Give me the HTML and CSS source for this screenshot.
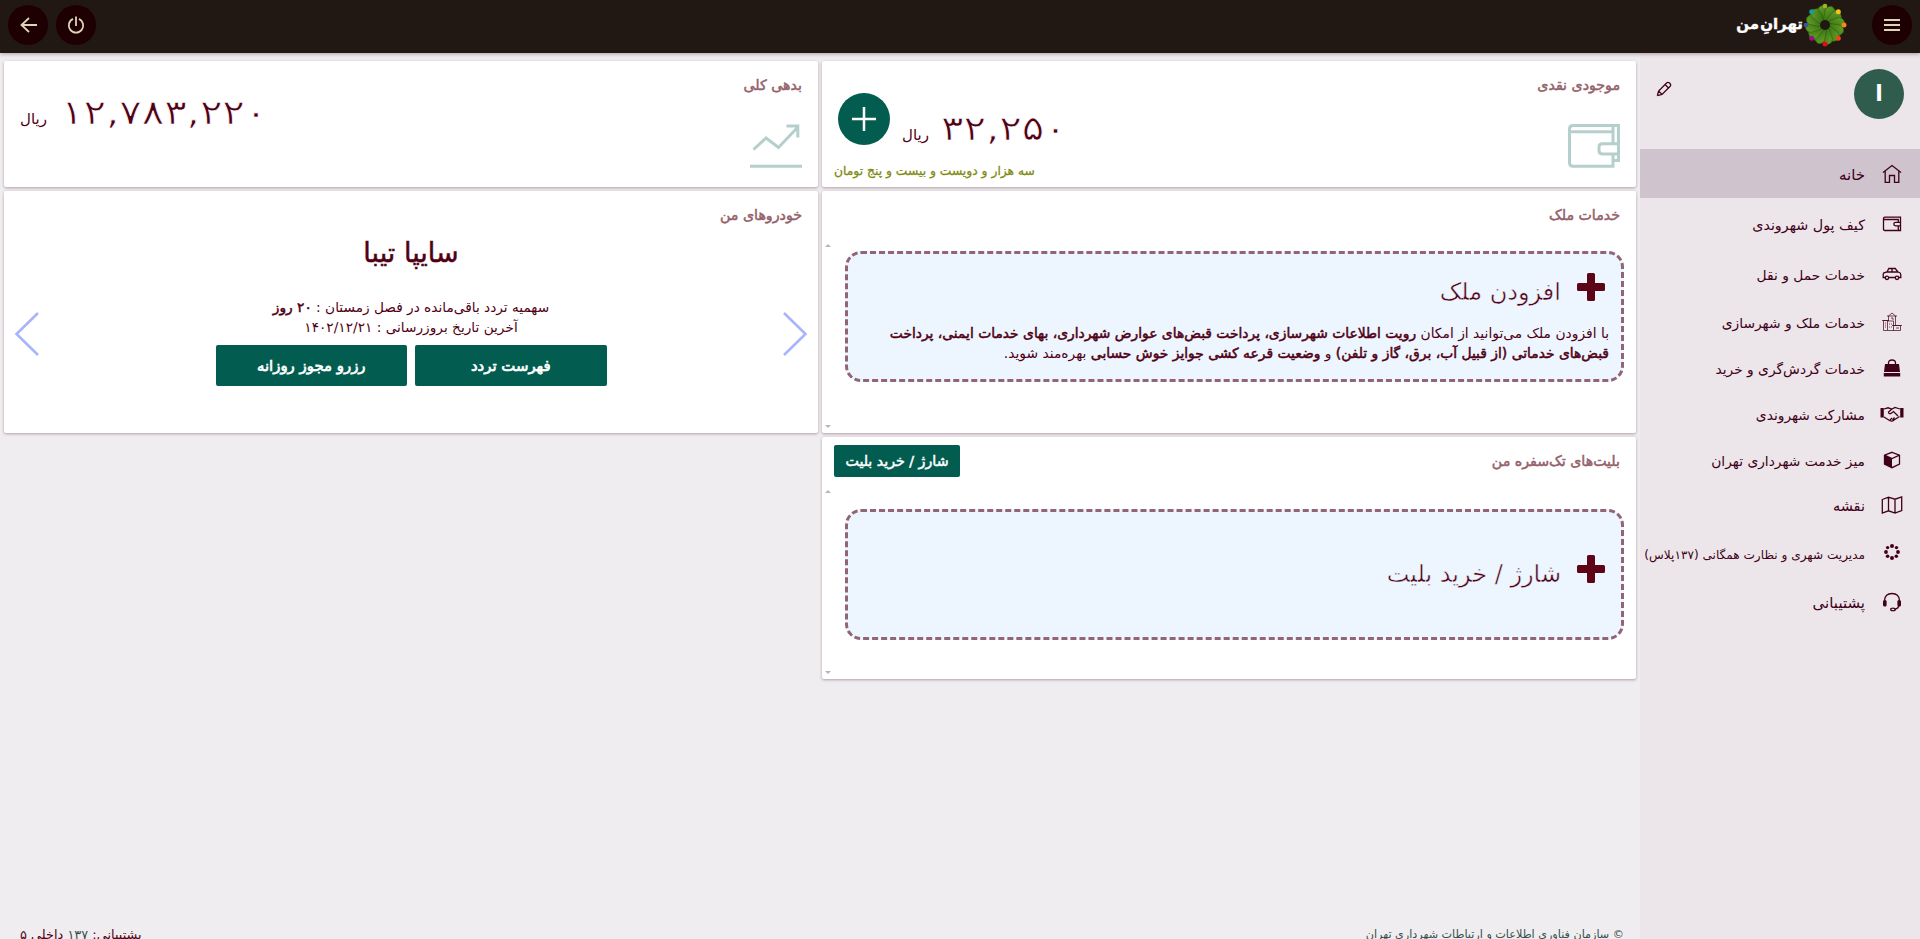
FILE: index.html
```html
<!DOCTYPE html>
<html lang="fa" dir="rtl">

<head>
  <meta charset="UTF-8">
  <meta name="viewport" content="width=device-width, initial-scale=1.0">
  <title>تهران من</title>
  <link rel="stylesheet" href="styles.css">
</head>

<body>
  <header class="topbar">
    <button class="round">
      <svg width="16" height="12" viewBox="0 0 16 12"><path d="M0 1h16M0 6h16M0 11h16" /></svg>
    </button>
    <div class="logo">
      <svg width="44" height="44" viewBox="-22 -22 44 44">
        <defs>
          <linearGradient id="leaf" x1="0" y1="0" x2="1" y2="1">
            <stop offset="0" stop-color="#6ba32c" />
            <stop offset="1" stop-color="#2f6d0c" />
          </linearGradient>
          <path id="petal" d="M-4 -4L-7.5 -14Q-7 -18.5 -3 -19.5L2 -18Q4 -10 1 -4Z" fill="url(#leaf)" stroke="#28570e" stroke-width=".5" />
        </defs>
        <use href="#petal" />
        <use href="#petal" transform="rotate(30)" />
        <use href="#petal" transform="rotate(60)" />
        <use href="#petal" transform="rotate(90)" />
        <use href="#petal" transform="rotate(120)" />
        <use href="#petal" transform="rotate(150)" />
        <use href="#petal" transform="rotate(180)" />
        <use href="#petal" transform="rotate(210)" />
        <use href="#petal" transform="rotate(240)" />
        <use href="#petal" transform="rotate(270)" />
        <use href="#petal" transform="rotate(300)" />
        <use href="#petal" transform="rotate(330)" />
        <circle r="5" fill="#211713" />
        <circle cx="0" cy="-19" r="2.3" fill="#a4b51c" />
        <circle cx="13.3" cy="-13.3" r="2.5" fill="#f3c318" />
        <circle cx="19" cy="0" r="2.5" fill="#f28a1c" />
        <circle cx="13.3" cy="13.3" r="2.5" fill="#ee4419" />
        <circle cx="0" cy="19" r="2.5" fill="#e30d18" />
        <circle cx="-13.3" cy="13.3" r="2.5" fill="#96127f" />
        <circle cx="-19" cy="0" r="2.3" fill="#3457a8" />
        <circle cx="-13.3" cy="-13.3" r="2.5" fill="#1a9a9d" />
      </svg>
      <span>تهرانِ من</span>
    </div>
    <button class="round power">
      <svg width="18" height="18" viewBox="0 0 18 18"><path d="M6 2.9A7.2 7.2 0 1 0 12 2.9M9 0.5V10" /></svg>
    </button>
    <button class="round">
      <svg width="17" height="16" viewBox="0 0 17 16"><path d="M17 8H1.5M9 1L1.5 8L9 15" /></svg>
    </button>
  </header>

  <div class="page">
    <aside class="sidebar">
      <div class="profile">
        <div class="avatar">ا</div>
        <svg class="pencil" width="16" height="16" viewBox="0 0 16 16"><path d="M1.3 14.7L2.6 10L10.8 1.8Q12 .8 13.2 1.8L14.2 2.8Q15.2 4 14.2 5.2L6 13.4L1.3 14.7M9 3.5L12.5 7M2.6 10L6 13.4" /></svg>
      </div>
      <nav class="menu">
        <a class="active home">
          <svg width="20" height="20" viewBox="0 0 20 20"><path d="M1 8.5L10 1.5L19 8.5M3.2 7V18.3H7.5V11.5H12.5V18.3H16.8V7" /></svg>
          <span>خانه</span>
        </a>
        <a class="wallet">
          <svg width="20" height="18" viewBox="0 0 20 18"><path d="M2.2 2.2H18.5V15.5H2.8Q1.5 15.5 1.5 14V3.5Q1.5 2.2 3 2.2M2 4.5H16.3V7.5M18.5 7.3H13.5Q11.8 7.3 11.8 9Q11.8 10.8 13.5 10.8H18.5M16.3 11V15" /></svg>
          <span>کیف پول شهروندی</span>
        </a>
        <a class="car">
          <svg width="20" height="14" viewBox="0 0 20 14"><path d="M3.2 10.5H1.2V7.2Q1.2 5.8 3 5.5L5 5L6.8 1.5H13.2L16 5L17.4 5.5Q18.8 6 18.8 8V10.5H16.8M6.8 10.5H13.2M5 5H16M10 1.5V5" /><circle cx="5" cy="10.8" r="1.7" /><circle cx="15" cy="10.8" r="1.7" /></svg>
          <span>خدمات حمل و نقل</span>
        </a>
        <a class="city">
          <svg width="20" height="20" viewBox="0 0 20 20"><path d="M1.5 18.5V8.5H5.5V18.5H1.5M5.5 18.5H18.5V13.5H11.5M5.5 9H11.5V18.5M6.5 9V4L10 1L13.5 4V13M5 4H15M0 8.5H7M9 6H11V8M3 11h1M3 13h1M3 15h1M7 12h1M9 12h1M7 15h1M9 15h1M14 16h3M10 13.5h10" /></svg>
          <span>خدمات ملک و شهرسازی</span>
        </a>
        <a class="bag">
          <svg width="20" height="20" viewBox="0 0 20 20"><path class="fill" d="M3 6H17L18 14H2ZM1.8 15H18.2V18.5H1.8Z" /><path class="handle" d="M6.5 9V5Q6.5 2 10 2Q13.5 2 13.5 5V9" /></svg>
          <span>خدمات گردش‌گری و خرید</span>
        </a>
        <a class="hands">
          <svg width="24" height="18" viewBox="0 0 24 18"><path d="M4 4L8 2.8L12 4L15 2.5L20 4M4 12L9.5 15.5Q12 17 14 15L19.5 11.5M12 4L8.5 7Q8.5 9.2 11 8.5L13.5 6.5L18 11M10 15L12 13M12.5 15L14.5 12.5" /><path class="fill" d="M0.5 3H3.8V12.5H0.5ZM20.2 3H23.5V12.5H20.2Z" /></svg>
          <span>مشارکت شهروندی</span>
        </a>
        <a class="cube">
          <svg width="18" height="18" viewBox="0 0 18 18"><path d="M9 1.3L16.5 4.2V13L9 16.7L1.5 13V4.2ZM1.5 4.2L9 7.5L16.5 4.2" /><path class="fill" d="M1.5 4.2L9 7.5V16.7L1.5 13Z" /></svg>
          <span>میز خدمت شهرداری تهران</span>
        </a>
        <a class="map">
          <svg width="22" height="18" viewBox="0 0 22 18"><path d="M1.3 3.5L7.5 1.2L14 3.2L20.7 1V14.5L14 17L7.5 14.8L1.3 17ZM7.5 1.2V14.8M14 3.2V17" /></svg>
          <span>نقشه</span>
        </a>
        <a class="plus137">
          <svg width="16" height="16" viewBox="0 0 16 16"><circle class="fill" cx="8" cy="2" r="2" /><circle class="fill" cx="12.5" cy="3.6" r="1.7" /><circle class="fill" cx="14" cy="8" r="1.9" /><circle class="fill" cx="12.3" cy="12.3" r="1.8" /><circle class="fill" cx="8" cy="14" r="2" /><circle class="fill" cx="3.6" cy="12.3" r="1.8" /><circle class="fill" cx="2" cy="8" r="1.9" /><circle class="fill" cx="3.6" cy="3.6" r="1.7" /></svg>
          <span>مدیریت شهری و نظارت همگانی (۱۳۷پلاس)</span>
        </a>
        <a class="support">
          <svg width="20" height="20" viewBox="0 0 20 20"><path d="M2.5 8.5Q3 1.5 10 1.5Q17 1.5 17.5 8.5M17.3 13Q16 17 12.5 17.3" /><rect class="fill" x="1" y="8" width="3.6" height="6.5" rx="1.5" /><rect class="fill" x="15.4" y="8" width="3.6" height="6.5" rx="1.5" /><ellipse cx="11" cy="17.4" rx="2.3" ry="1.3" /></svg>
          <span>پشتیبانی</span>
        </a>
      </nav>
    </aside>

    <main class="content">
      <div class="cards">
        <section class="card cash">
          <div class="info">
            <h2>موجودی نقدی</h2>
            <svg class="pale" width="52" height="44" viewBox="0 0 52 44"><path d="M45 6.5V1.5H5Q1.5 1.5 1.5 5V38.5Q1.5 42.3 5 42.3H45V31M1.5 7.8H45V19.5M45 1.5H50.5V36.5H46M50.5 19.8H34.5Q31 19.8 31 23V26.5Q31 30 34.5 30H50.5" /></svg>
          </div>
          <div class="sum">
            <div class="money">
              <span class="num">۳۲,۲۵۰</span>
              <span class="rial">ریال</span>
              <button class="add"><svg width="24" height="24" viewBox="0 0 24 24"><path d="M12 0V24M0 12H24" /></svg></button>
            </div>
            <p class="words">سه هزار و دویست و بیست و پنج تومان</p>
          </div>
        </section>

        <section class="card debt">
          <div class="info">
            <h2>بدهی کلی</h2>
            <svg class="pale" width="52" height="44" viewBox="0 0 52 44"><path d="M3.5 25.5L16 14L28.5 23.5L47 4M36.5 2H47.8V13.5M0 42.2H52" /></svg>
          </div>
          <div class="money">
            <span class="num">۱۲,۷۸۳,۲۲۰</span>
            <span class="rial">ریال</span>
          </div>
        </section>

        <section class="card estate">
          <div class="head">
            <h2>خدمات ملک</h2>
          </div>
          <div class="scroll">
            <div class="dashed">
              <div class="big">
                <svg width="28" height="28" viewBox="0 0 28 28"><path d="M11.5 0H16.5Q18 0 18 1.5V10H26.5Q28 10 28 11.5V16.5Q28 18 26.5 18H18V26.5Q18 28 16.5 28H11.5Q10 28 10 26.5V18H1.5Q0 18 0 16.5V11.5Q0 10 1.5 10H10V1.5Q10 0 11.5 0Z" /></svg>
                <span>افزودن ملک</span>
              </div>
              <p>با افزودن ملک می‌توانید از امکان <b>رویت اطلاعات شهرسازی، پرداخت قبض‌های عوارض شهرداری، بهای خدمات ایمنی، پرداخت</b></p>
              <p><b>قبض‌های خدماتی (از قبیل آب، برق، گاز و تلفن)</b> و <b>وضعیت قرعه کشی جوایز خوش حسابی</b> بهره‌مند شوید.</p>
            </div>
          </div>
        </section>

        <section class="card cars">
          <h2>خودروهای من</h2>
          <div class="slider">
            <svg class="arrow" width="26" height="44" viewBox="0 0 26 44"><path d="M2 1L23.5 22L2 43" /></svg>
            <div class="slide">
              <h3>سایپا تیبا</h3>
              <p>سهمیه تردد باقی‌مانده در فصل زمستان : <b>۲۰ روز</b></p>
              <p>آخرین تاریخ بروزرسانی : ۱۴۰۲/۱۲/۲۱</p>
              <div class="actions">
                <button>فهرست تردد</button>
                <button>رزرو مجوز روزانه</button>
              </div>
            </div>
            <svg class="arrow" width="26" height="44" viewBox="0 0 26 44"><path d="M24 1L2.5 22L24 43" /></svg>
          </div>
        </section>

        <section class="card ticket">
          <div class="head">
            <h2>بلیت‌های تک‌سفره من</h2>
            <button class="charge">شارژ / خرید بلیت</button>
          </div>
          <div class="scroll">
            <div class="dashed">
              <div class="big">
                <svg width="28" height="28" viewBox="0 0 28 28"><path d="M11.5 0H16.5Q18 0 18 1.5V10H26.5Q28 10 28 11.5V16.5Q28 18 26.5 18H18V26.5Q18 28 16.5 28H11.5Q10 28 10 26.5V18H1.5Q0 18 0 16.5V11.5Q0 10 1.5 10H10V1.5Q10 0 11.5 0Z" /></svg>
                <span>شارژ / خرید بلیت</span>
              </div>
            </div>
          </div>
        </section>
      </div>

      <footer>
        <span class="org">© سازمان فناوری اطلاعات و ارتباطات شهرداری تهران</span>
        <span class="tel">پشتیبانی: <i>۱۳۷</i> داخلی ۵</span>
      </footer>
    </main>
  </div>
</body>

</html>
```
FILE: styles.css
```css
* {
  box-sizing: border-box;
}

body {
  margin: 0;
  height: 939px;
  overflow: hidden;
  font-family: "DejaVu Sans", sans-serif;
  font-size: 13px;
  color: #500014;
  background-color: #efedf0;
}

h2,
h3,
p {
  margin: 0;
}

/* semi bold */
h2,
h3,
b,
button,
.words {
  font-weight: normal;
  -webkit-text-stroke: .5px currentColor;
}

button {
  border: none;
  padding: 0;
  font-family: inherit;
  color: #fff;
  background-color: #025d50;
  border-radius: 2px;
}

svg {
  display: block;
  flex: none;
}

/* header */
.topbar {
  position: relative;
  display: flex;
  align-items: center;
  height: 53px;
  padding: 0 8px 3px;
  background-color: #211713;
  box-shadow: 0 1px 4px rgba(60, 0, 20, .35);
}

.round {
  display: flex;
  align-items: center;
  justify-content: center;
  width: 40px;
  height: 40px;
  border-radius: 50%;
  background-color: #1f0002;
}

.round path {
  fill: none;
  stroke: #e0d4b8;
  stroke-width: 1.8;
}

.power {
  margin-right: auto;
  margin-left: 8px;
}

.logo {
  display: flex;
  align-items: center;
  margin-right: 25px;
  color: #fff;
  font-size: 15px;
  font-weight: bold;
  word-spacing: -4px;
}

.logo span {
  padding-bottom: 3px;
  white-space: nowrap;
  -webkit-text-stroke: .4px #fff;
}

.page {
  display: flex;
  height: 886px;
}

/* sidebar */
.sidebar {
  flex: none;
  width: 280px;
  background-color: #ece6eb;
}

.profile {
  display: flex;
  justify-content: space-between;
  height: 96px;
  padding: 16px;
}

.avatar {
  width: 50px;
  height: 50px;
  border-radius: 50%;
  background-color: #2f5c4d;
  color: #fff;
  font-size: 22px;
  font-weight: bold;
  line-height: 50px;
  text-align: center;
}

.pencil {
  margin-top: 12px;
}

.pencil path,
.menu path,
.menu circle,
.menu ellipse {
  fill: none;
  stroke: #400018;
  stroke-width: 1.3;
}

.menu .fill {
  fill: #400018;
  stroke: none;
}

.menu a {
  display: flex;
  align-items: center;
  height: 50px;
  padding-right: 15px;
  font-size: 13.8px;
  color: #400018;
  white-space: nowrap;
}

.menu span {
  padding-top: 2px;
}

.menu svg {
  width: 26px;
  margin-left: 14px;
}

.menu .active {
  height: 49px;
  font-size: 15px;
  background-color: #cfc3cd;
}

.menu .wallet {
  height: 51px;
  font-size: 14.3px;
}

.menu .city path {
  stroke-width: .7;
}

.menu .city,
.menu .bag,
.menu .hands,
.menu .cube {
  height: 46px;
}

.menu .map {
  height: 44px;
  font-size: 14.5px;
}

.menu .plus137 {
  font-size: 12.1px;
}

.menu .plus137 span {
  padding-top: 5px;
}

.menu .support {
  font-size: 15px;
}

/* cards */
.content {
  display: flex;
  flex-direction: column;
  flex: 1;
}

.cards {
  flex: 1;
  display: grid;
  grid-template-columns: 814px 814px;
  grid-template-rows: 126px 242px 242px;
  gap: 4px;
  padding: 8px 4px;
}

.card {
  background-color: #fff;
  border-radius: 2px;
  box-shadow: 0 1px 3px rgba(70, 0, 30, .35);
}

.card h2 {
  font-size: 14.2px;
  line-height: 18px;
  color: #94616a;
  white-space: nowrap;
}

.cash,
.debt {
  display: flex;
  justify-content: space-between;
  padding: 15px 16px 0;
}

.pale {
  margin-top: 30px;
  margin-right: 0;
}

.pale path {
  fill: none;
  stroke: #b5d0cc;
  stroke-width: 3;
}

.cash {
  padding-left: 12px;
}

.money {
  display: flex;
  align-items: baseline;
}

/* thin, wide digits */
.num {
  font-size: 34px;
  line-height: 40px;
  transform: scaleX(1.23);
  transform-origin: left;
  -webkit-text-stroke: .7px #fff;
}

.rial {
  margin-right: 12px;
  font-size: 15px;
}

.debt .money {
  padding-top: 16px;
}

.debt .rial {
  margin-right: 14px;
}

.sum .money {
  height: 78px;
  padding: 32px 0 0 4px;
}

.add {
  display: flex;
  align-items: center;
  justify-content: center;
  align-self: flex-start;
  width: 52px;
  height: 52px;
  margin-top: -15px;
  margin-right: 12px;
  border-radius: 50%;
}

.add path {
  stroke: #fff;
  stroke-width: 2.5;
}

.words {
  color: #7f8c12;
  font-size: 12.3px;
  line-height: 34px;
  text-align: left;
  -webkit-text-stroke-width: .3px;
}

.head {
  display: flex;
  justify-content: space-between;
  height: 49px;
  padding: 15px 16px 0 12px;
}

.charge {
  width: 126px;
  height: 32px;
  margin-top: -7px;
  font-size: 14.2px;
}

.scroll {
  position: relative;
  height: 190px;
  padding: 11px 12px 0 23px;
}

/* small scrollbar arrows */
.scroll::before,
.scroll::after {
  content: "";
  position: absolute;
  left: 3px;
  border: 3px solid transparent;
}

.scroll::before {
  top: 4px;
  border-bottom-color: #b9b4b8;
  border-top-width: 0;
}

.scroll::after {
  bottom: 2px;
  border-top-color: #b9b4b8;
  border-bottom-width: 0;
}

.dashed {
  height: 131px;
  padding: 19px 12px 0;
  border: 3px dashed #916575;
  border-radius: 16px;
  background-color: #edf6ff;
}

.big {
  display: flex;
  height: 50px;
  padding-right: 4px;
  font-size: 24px;
}

.big svg {
  margin-left: 16px;
}

.big path {
  fill: #5d0516;
}

.big span {
  line-height: 39px;
  -webkit-text-stroke: .5px #edf6ff;
}

.dashed p {
  font-size: 13.85px;
  line-height: 20px;
  white-space: nowrap;
}

.ticket .scroll {
  padding-top: 23px;
}

.ticket .dashed {
  padding-top: 43px;
}

.cars {
  padding: 15px 10px 0;
}

.cars h2 {
  padding-right: 6px;
}

.slider {
  display: flex;
  justify-content: space-between;
}

.arrow {
  margin-top: 88px;
}

.arrow path {
  fill: none;
  stroke: #a9b5fb;
  stroke-width: 2.6;
}

.slide {
  padding-top: 11px;
  text-align: center;
}

.slide h3 {
  height: 62px;
  font-size: 27px;
  line-height: 35px;
}

.slide p {
  font-size: 13.7px;
  line-height: 20px;
}

.actions {
  display: flex;
  gap: 8px;
  margin-top: 8px;
}

.actions button {
  width: 191.5px;
  height: 41px;
  font-size: 14.9px;
  -webkit-text-stroke-width: .7px;
}

footer {
  display: flex;
  justify-content: space-between;
  height: 18px;
  padding: 0 16px 0 20px;
  font-size: 12.9px;
  line-height: 28px;
}

.org {
  font-size: 11.2px;
  color: #35504d;
}

footer i {
  font-style: normal;
  color: #35504d;
}
```
